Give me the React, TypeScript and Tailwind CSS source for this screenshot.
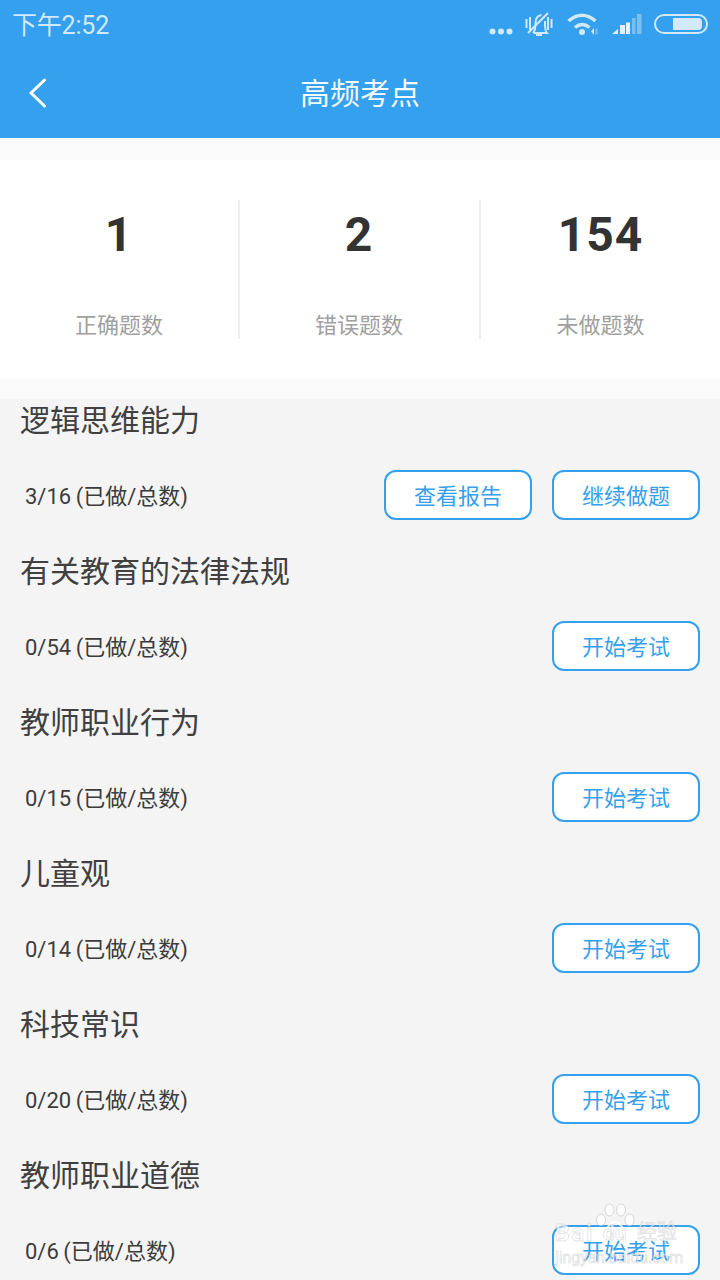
const topics = [
  { name: "逻辑思维能力", count: "3/16", started: true },
  { name: "有关教育的法律法规", count: "0/54", started: false },
  { name: "教师职业行为", count: "0/15", started: false },
  { name: "儿童观", count: "0/14", started: false },
  { name: "科技常识", count: "0/20", started: false },
  { name: "教师职业道德", count: "0/6", started: false },
];

const stats = [
  { value: "1", label: "正确题数" },
  { value: "2", label: "错误题数" },
  { value: "154", label: "未做题数" },
];

const OutlineButton = ({ text }: { text: string }) => (
  <button className="w-[148px] h-[50px] pt-[4px] bg-white rounded-[12px] border-2 border-[#35a0ee] text-[22px] leading-none text-[#35a0ee]">
    {text}
  </button>
);

const StatusIcons = () => (
  <div className="flex items-center mb-[2px]">
    <svg width="24" height="7" viewBox="0 0 24 7" className="mt-[15px]" fill="#d2e8fb">
      <circle cx="3.500" cy="3.500" r="3" />
      <circle cx="12" cy="3.500" r="3" />
      <circle cx="20.500" cy="3.500" r="3" />
    </svg>
    <svg width="28" height="24" viewBox="0 0 28 24" className="ml-[12px]" fill="none" stroke="#d2e8fb" strokeWidth="2">
      <path d="M8 21c2-2 2.500-5 2.500-10 0-4 2-7.500 6-8" />
      <path d="M20 9v5c0 3 .8 5.500 2 7H9" />
      <path d="M11 23h6" strokeWidth="2" />
      <path d="M3 21 L23 1" />
      <path d="M1.500 7v9M5 5v13M23 5v13M26.500 7v9" />
    </svg>
    <svg width="31" height="22" viewBox="0 0 31 22" className="ml-[14px]" fill="none" stroke="#d2e8fb">
      <path d="M1.500 8Q15 -3.500 28.500 8" strokeWidth="3.500" />
      <path d="M8 14.500Q15 8.500 22.500 14.500" strokeWidth="3.500" />
      <circle cx="15" cy="19" r="3" fill="#d2e8fb" stroke="none" />
      <path d="M27 15v7l-3-3.500z" fill="#d2e8fb" stroke="none" />
      <path d="M29.500 15.500v6" stroke="#7cc0f3" strokeWidth="2" />
    </svg>
    <svg width="31" height="21" viewBox="0 0 31 21" className="ml-[13px]">
      <path d="M1 20l6-5v5z" fill="#e4f1fc" />
      <rect x="9" y="11" width="5" height="9" fill="#e4f1fc" />
      <rect x="15" y="8.500" width="4" height="11.500" fill="#e4f1fc" />
      <rect x="21" y="4" width="3.500" height="16" fill="#7cc0f3" />
      <rect x="26" y="0" width="4.500" height="20" fill="#7cc0f3" />
    </svg>
    <div className="ml-[12px] w-[54px] h-[20px] rounded-full border-2 border-[#d2e8fb] flex items-center justify-end pr-[4px]">
      <div className="w-[29px] h-[12px] bg-[#d2e8fb] rounded-r-[4px]" />
    </div>
  </div>
);

const Watermark = () => (
  <div className="absolute left-[555px] top-[1203px] w-[130px] h-[64px] text-white/70 pointer-events-none [-webkit-text-stroke:1px_rgba(120,120,120,0.2)]">
    <svg width="42" height="38" viewBox="0 0 42 38" className="absolute left-[39px] top-0" fill="#ffffff" fillOpacity="0.7" stroke="#8a8a8a" strokeOpacity="0.3" strokeWidth="1">
      <ellipse cx="7" cy="17" rx="4.500" ry="6" />
      <ellipse cx="15.500" cy="7" rx="4.500" ry="6" />
      <ellipse cx="27" cy="7" rx="4.500" ry="6" />
      <ellipse cx="35.500" cy="17" rx="4.500" ry="6" />
      <path d="M21 19c-4 0-6 4-9 7-3 4 0 10 5 9 3-1 5-1 8 0 5 1 8-5 5-9-3-3-5-7-9-7z" fill="none" strokeWidth="2" stroke="#ffffff" strokeOpacity="0.8" />
    </svg>
    <span className="absolute left-0 top-[19px] text-[23px] leading-none font-bold tracking-[2px]">Bai</span>
    <span className="absolute left-[48px] top-[20px] text-[21px] leading-none font-bold">du</span>
    <span className="absolute left-[82px] top-[19px] text-[20px] leading-none">经验</span>
    <span className="absolute left-0 top-[47px] text-[16px] leading-none tracking-[-0.1px] whitespace-nowrap">jingyan.baidu.com</span>
  </div>
);

const App = () => {
  return (
    <div className="relative w-[720px] h-[1280px] overflow-hidden bg-[#f4f4f4] font-['Roboto','Noto_Sans_CJK_SC',sans-serif]">
      <div className="h-[138px] bg-[#35a0ee]">
        <div className="h-[50px] px-[12px] flex items-center justify-between">
          <span className="text-[25px] leading-none tracking-[-0.2px] text-[#d2e8fb]">下午2:52</span>
          <StatusIcons />
        </div>
        <div className="relative h-[88px] flex items-center justify-center">
          <svg width="18" height="30" viewBox="0 0 18 30" className="absolute left-[29px] top-[28px]" fill="none" stroke="#ffffff" strokeWidth="3" strokeLinecap="round" strokeLinejoin="round">
            <path d="M15.500 2 L2 15 L15.500 28" />
          </svg>
          <h1 className="text-[30px] leading-none text-[#f4faff] font-normal">高频考点</h1>
        </div>
      </div>

      <div className="py-[22px] bg-[#fafafa] h-[261px]">
        <div className="h-[219px] bg-white grid grid-cols-[240px_241px_239px] items-center">
          {stats.map((s, i) => (
            <div key={s.label} className={`h-[139px] flex flex-col items-center ${i < 2 ? "border-r-2 border-[#eeeeee]" : ""} ${i === 1 ? "pr-[1px]" : ""}`}>
              <span className="mt-[6px] text-[48px] leading-[58px] font-bold tracking-[1px] text-[#333333]">{s.value}</span>
              <span className="mt-[47px] text-[22px] leading-[30px] text-[#a0a0a0]">{s.label}</span>
            </div>
          ))}
        </div>
      </div>

      <div className="px-[20px]">
        {topics.map((t) => (
          <div key={t.name} className="h-[151px]">
            <h2 className="h-[42px] text-[30px] leading-[44px] font-normal text-[#404040]">{t.name}</h2>
            <div className="mt-[29px] h-[50px] flex items-center justify-between">
              <span className="ml-[5px] pt-[2px] text-[22px] [word-spacing:-1px] text-[#3c3c3c]">{t.count} (已做/总数)</span>
              <div className="flex gap-[20px]">
                {t.started && <OutlineButton text="查看报告" />}
                <OutlineButton text={t.started ? "继续做题" : "开始考试"} />
              </div>
            </div>
          </div>
        ))}
      </div>

      <Watermark />
    </div>
  );
};

export default App;
